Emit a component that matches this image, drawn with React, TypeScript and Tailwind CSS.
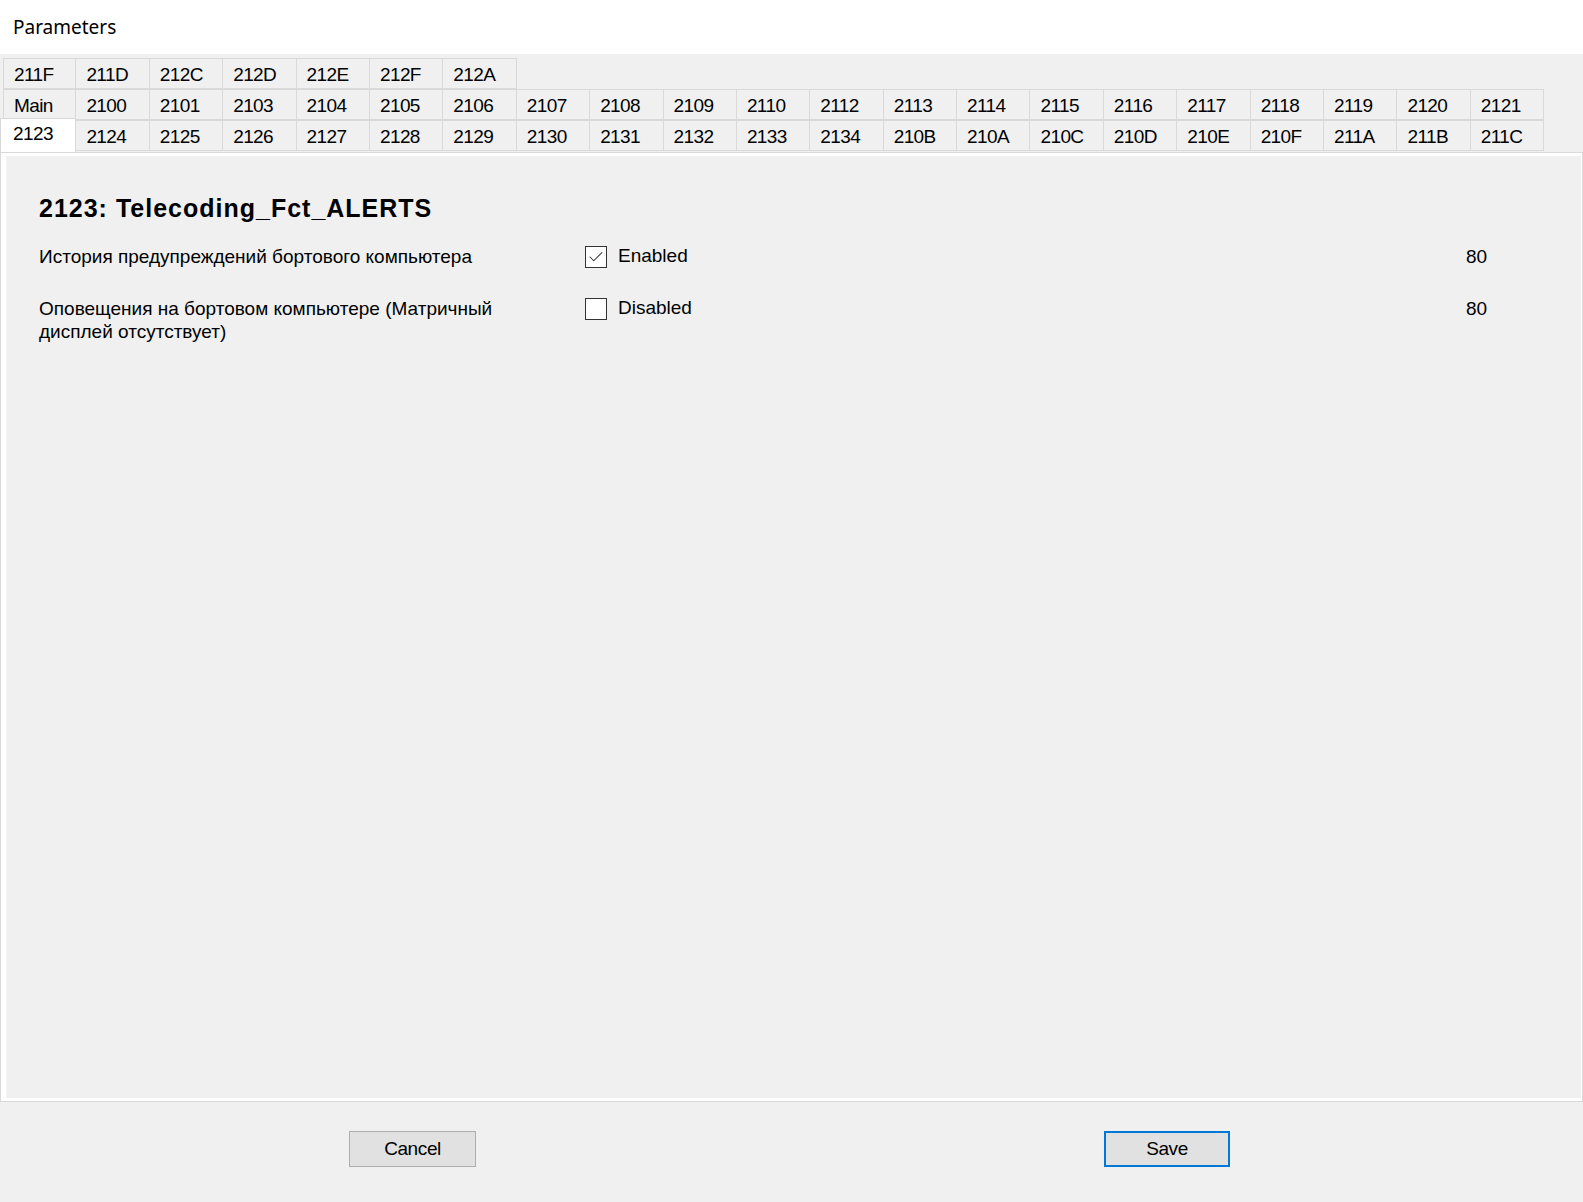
import { Check } from "lucide-react";

const tabRows: string[][] = [
  ["211F", "211D", "212C", "212D", "212E", "212F", "212A"],
  ["Main", "2100", "2101", "2103", "2104", "2105", "2106", "2107", "2108", "2109", "2110", "2112", "2113", "2114", "2115", "2116", "2117", "2118", "2119", "2120", "2121"],
  ["2123", "2124", "2125", "2126", "2127", "2128", "2129", "2130", "2131", "2132", "2133", "2134", "210B", "210A", "210C", "210D", "210E", "210F", "211A", "211B", "211C"],
];

const params = [
  { label: "История предупреждений бортового компьютера", checked: true, value: "80" },
  { label: "Оповещения на бортовом компьютере (Матричный дисплей отсутствует)", checked: false, value: "80" },
];

const selected = "2123";

const Tab = ({ name }: { name: string }) => {
  if (name === selected) {
    return (
      <div className="relative z-10 -ml-[3px] -mt-[3px] h-[34px] bg-white border-t border-l border-r border-[#d9d9d9] pl-[12px] pt-[2px] leading-[26px]">
        {name}
      </div>
    );
  }
  return (
    <div className="h-[31px] border border-[#d9d9d9] -ml-px -mt-px first:ml-0 pl-[10px] leading-[31px] bg-[#f0f0f0]">
      {name}
    </div>
  );
};

const Checkbox = ({ checked }: { checked: boolean }) => (
  <div className="w-[22px] h-[22px] border border-[#333] bg-white flex items-center justify-center">
    {checked && <Check size={18} strokeWidth={1.4} className="text-[#333]" />}
  </div>
);

export default function App() {
  return (
    <div className="w-[1583px] h-[1202px] bg-[#f0f0f0] flex flex-col font-['Liberation_Sans',Arial,sans-serif] text-black">
      <div className="h-[54px] bg-white flex items-center pl-[13px] text-[19px] font-['Noto_Sans',sans-serif]">
        Parameters
      </div>

      {/* tab strip, three rows, selected row sits on the bottom */}
      <div className="pt-[5px] pl-[3px] text-[19px] tracking-[-0.6px]">
        {tabRows.map((row, i) => (
          <div key={i} className="grid grid-cols-[repeat(21,73.4px)] h-[31px]">
            {row.map((name) => (
              <Tab key={name} name={name} />
            ))}
          </div>
        ))}
      </div>

      <div className="h-[950px] border border-[#d9d9d9] bg-white pl-[5px] pt-[3px] pr-[1px] pb-[3px]">
        <div className="h-full bg-[#f0f0f0] pl-[33px] pt-[38px]">
          <h1 className="text-[25px] font-bold leading-[28px] tracking-[1px]">2123: Telecoding_Fct_ALERTS</h1>
          <div className="mt-[23px] flex flex-col gap-[29px] text-[19px]">
            {params.map((p) => (
              <div key={p.label} className="flex items-start leading-[23px]">
                <div className="w-[546px] pr-[56px]">{p.label}</div>
                <div className="w-[881px] h-[23px] flex items-center gap-[11px]">
                  <Checkbox checked={p.checked} />
                  <span className="-mt-[2px]">{p.checked ? "Enabled" : "Disabled"}</span>
                </div>
                <div>{p.value}</div>
              </div>
            ))}
          </div>
        </div>
      </div>

      <div className="flex pt-[29px] text-[19px] tracking-[-0.4px]">
        <button className="ml-[349px] w-[127px] h-[36px] border border-[#adadad] bg-[#e1e1e1]">Cancel</button>
        <button className="ml-[628px] w-[126px] h-[36px] border-2 border-[#0078d7] bg-[#e1e1e1]">Save</button>
      </div>
    </div>
  );
}
